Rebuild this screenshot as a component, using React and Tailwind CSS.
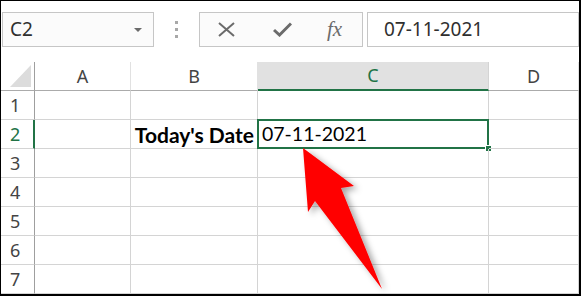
const cols = [
    { key: 'A', w: 'w-[96px]' },
    { key: 'B', w: 'w-[127px]' },
    { key: 'C', w: 'w-[231px]' },
    { key: 'D', w: 'flex-1' },
];

const rows = [1, 2, 3, 4, 5, 6, 7];

const uiFont = { fontFamily: '"Noto Sans", "Open Sans", sans-serif' };
const cellFont = { fontFamily: 'Lato, "Liberation Sans", sans-serif' };

const FormulaBar = () => (
    <div className="h-[61px] flex items-start pt-[11px]" style={uiFont}>
        {/* name box */}
        <div className="ml-px w-[152px] h-[35px] border border-[#c6c6c6] bg-[#fbfbfb] flex items-center justify-between pl-[7px] pr-[11px]">
            <span className="text-[19px] text-[#2f2f2f] leading-none">C2</span>
            <svg width="8" height="4" viewBox="0 0 8 4">
                <path d="M0 0 H8 L4 4 Z" fill="#6b6b6b" />
            </svg>
        </div>
        <div className="w-[45px] h-[35px] flex flex-col items-center justify-center gap-[4px]">
            <span className="w-[3px] h-[3px] bg-[#a8a8a8]" />
            <span className="w-[3px] h-[3px] bg-[#a8a8a8]" />
            <span className="w-[3px] h-[3px] bg-[#a8a8a8]" />
        </div>
        {/* cancel / enter / fx */}
        <div className="w-[164px] h-[35px] border border-[#c6c6c6] bg-[#fbfbfb] flex items-center">
            <svg className="ml-[18px]" width="17" height="15" viewBox="0 0 17 15">
                <path d="M1 1 L16 14 M16 1 L1 14" stroke="#6b6b6b" strokeWidth="2" fill="none" />
            </svg>
            <svg className="ml-[38px]" width="19" height="15" viewBox="0 0 19 15">
                <path d="M1 8 L6.5 13 L18 1.5" stroke="#6b6b6b" strokeWidth="3" fill="none" />
            </svg>
            <span className="ml-[35px] text-[21px] italic text-[#6b6b6b] leading-none" style={{ fontFamily: '"Liberation Serif", serif' }}>
                fx
            </span>
        </div>
        <div className="ml-[4px] flex-1 h-[35px] border border-[#c6c6c6] flex items-center pl-[16px]">
            <span className="text-[19px] text-[#2f2f2f] leading-none">07-11-2021</span>
        </div>
    </div>
);

const HeaderRow = () => (
    <div className="flex h-[29px]" style={uiFont}>
        <div className="w-[34px] border-r border-b border-r-[#9f9f9f] border-b-[#ababab] flex items-end justify-end pr-[3px] pb-[3px]">
            <svg width="21" height="22" viewBox="0 0 21 22">
                <path d="M21 0 V22 H0 Z" fill="#dcdcdc" />
            </svg>
        </div>
        {cols.map((c) => (
            <div
                key={c.key}
                className={
                    c.key === 'C'
                        ? `${c.w} bg-[#e1e1e1] border-r border-r-[#d4d4d4] border-b-2 border-b-[#217346] flex items-center justify-center text-[18px] text-[#217346]`
                        : `${c.w} border-r border-r-[#e1e1e1] border-b border-b-[#ababab] flex items-center justify-center text-[18px] text-[#444]`
                }
            >
                {c.key}
            </div>
        ))}
    </div>
);

const SheetRow = ({ n }) => (
    <div className="flex h-[29px]">
        <div
            className={
                n === 2
                    ? 'w-[34px] border-r-2 border-r-[#217346] border-b border-b-[#d4d4d4] flex items-center pl-[9px] text-[18px] text-[#217346]'
                    : 'w-[34px] border-r border-r-[#9f9f9f] border-b border-b-[#d4d4d4] flex items-center pl-[9px] text-[18px] text-[#444]'
            }
            style={uiFont}
        >
            {n}
        </div>
        {cols.map((c) => (
            <div
                key={c.key}
                className={`${c.w} relative border-r border-b border-[#d4d4d4] flex items-center text-[19.5px] text-black`}
                style={cellFont}
            >
                {n === 2 && c.key === 'B' && <span className="ml-auto pr-[3px] text-[21px] font-bold leading-none">Today's Date</span>}
                {n === 2 && c.key === 'C' && (
                    <>
                        <span className="pl-[4px] leading-none">07-11-2021</span>
                        <div className="absolute -inset-px border-2 border-[#217346]" />
                        <div className="absolute -right-[4px] -bottom-[4px] w-[7px] h-[7px] bg-[#217346] border border-white" />
                    </>
                )}
            </div>
        ))}
    </div>
);

const Arrow = () => (
    <svg className="absolute left-0 top-0 pointer-events-none" width="581" height="296" viewBox="0 0 581 296">
        <defs>
            <filter id="sh" x="-30%" y="-30%" width="160%" height="160%">
                <feDropShadow dx="4" dy="3" stdDeviation="3" floodColor="#000" floodOpacity="0.35" />
            </filter>
        </defs>
        <path d="M302 147 L353 185 L340 187 L381 288 L314 200 L307 211 Z" fill="#ff0000" filter="url(#sh)" />
    </svg>
);

export default function App() {
    return (
        <div className="relative w-[581px] h-[296px] overflow-hidden bg-white border-t border-l border-r-2 border-b-2 border-black">
            <FormulaBar />
            <HeaderRow />
            {rows.map((n) => (
                <SheetRow key={n} n={n} />
            ))}
            <Arrow />
        </div>
    );
}
